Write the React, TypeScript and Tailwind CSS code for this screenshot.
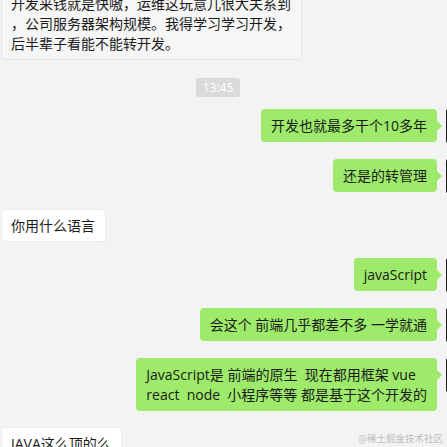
import React from 'react';

type Msg =
  | { kind: 'time'; text: string }
  | { kind: 'in' | 'out'; lines: string[]; faded?: boolean };

const MESSAGES: Msg[] = [
  {
    kind: 'in',
    faded: true,
    lines: [
      '开发来钱就是快嗷，运维这玩意儿很大关系到',
      '，公司服务器架构规模。我得学习学习开发，',
      '后半辈子看能不能转开发。',
    ],
  },
  { kind: 'time', text: '13:45' },
  { kind: 'out', lines: ['开发也就最多干个10多年'] },
  { kind: 'out', lines: ['还是的转管理'] },
  { kind: 'in', lines: ['你用什么语言'] },
  { kind: 'out', lines: ['javaScript'] },
  { kind: 'out', lines: ['会这个 前端几乎都差不多 一学就通'] },
  {
    kind: 'out',
    lines: ['JavaScript是 前端的原生  现在都用框架 vue', 'react  node  小程序等等 都是基于这个开发的'],
  },
  { kind: 'in', lines: ['JAVA这么顶的么'] },
];

const FONT = "font-['Open_Sans','Noto_Sans_CJK_SC',sans-serif]";

function Avatar() {
  // only a sliver of the avatar shows at the right edge
  return (
    <div className="w-[34px] h-[34px] shrink-0 rounded-[2px] bg-gradient-to-r from-[#1c1c1c] via-[#4a4a4a] to-[#2a2a2a]" />
  );
}

function Bubble({ msg }: { msg: Extract<Msg, { kind: 'in' | 'out' }> }) {
  const out = msg.kind === 'out';
  const base = 'rounded-[4px] px-[10px] text-[14px] leading-[20px] text-[#1a1a1a] whitespace-pre';
  const look = out
    ? 'bg-[#9eea6a] py-[6.5px]'
    : msg.faded
      ? 'bg-[#f6f6f6] border border-[#e4e4e4] py-[5.5px] pl-[9px]'
      : 'bg-white border border-[#ececec] py-[5.5px] pl-[9px]';
  return (
    <div className={`${base} ${look}`}>
      {msg.lines.map((l, i) => (
        <div key={i} className="h-[20px]">{l}</div>
      ))}
    </div>
  );
}

export default function App() {
  return (
    <div className={`relative w-[447px] h-[447px] overflow-hidden bg-[#f3f3f3] ${FONT}`}>
      <div className="flex flex-col gap-4 mt-[-13px]">
        {MESSAGES.map((m, i) => {
          if (m.kind === 'time') {
            return (
              <div key={i} className="flex justify-center pr-[11px] mt-[2px] mb-[-4px]">
                <span className="bg-[#dadada] text-white text-[12px] leading-[19px] px-[7px] rounded-[3px]">
                  {m.text}
                </span>
              </div>
            );
          }
          if (m.kind === 'in') {
            return (
              <div key={i} className="flex justify-start pl-px">
                <Bubble msg={m} />
              </div>
            );
          }
          return (
            <div key={i} className="flex justify-end items-start mr-[-33px]">
              <Bubble msg={m} />
              <div className="mt-[12px] w-0 h-0 border-y-[5px] border-y-transparent border-l-[5px] border-l-[#9eea6a]" />
              <div className="w-[4px] shrink-0" />
              <Avatar />
            </div>
          );
        })}
      </div>
      <div className="absolute right-[4px] bottom-[3px] text-[9.5px] leading-[12px] text-[#bdbdbd] font-['Noto_Sans_CJK_SC',sans-serif]">
        @稀土掘金技术社区
      </div>
    </div>
  );
}
